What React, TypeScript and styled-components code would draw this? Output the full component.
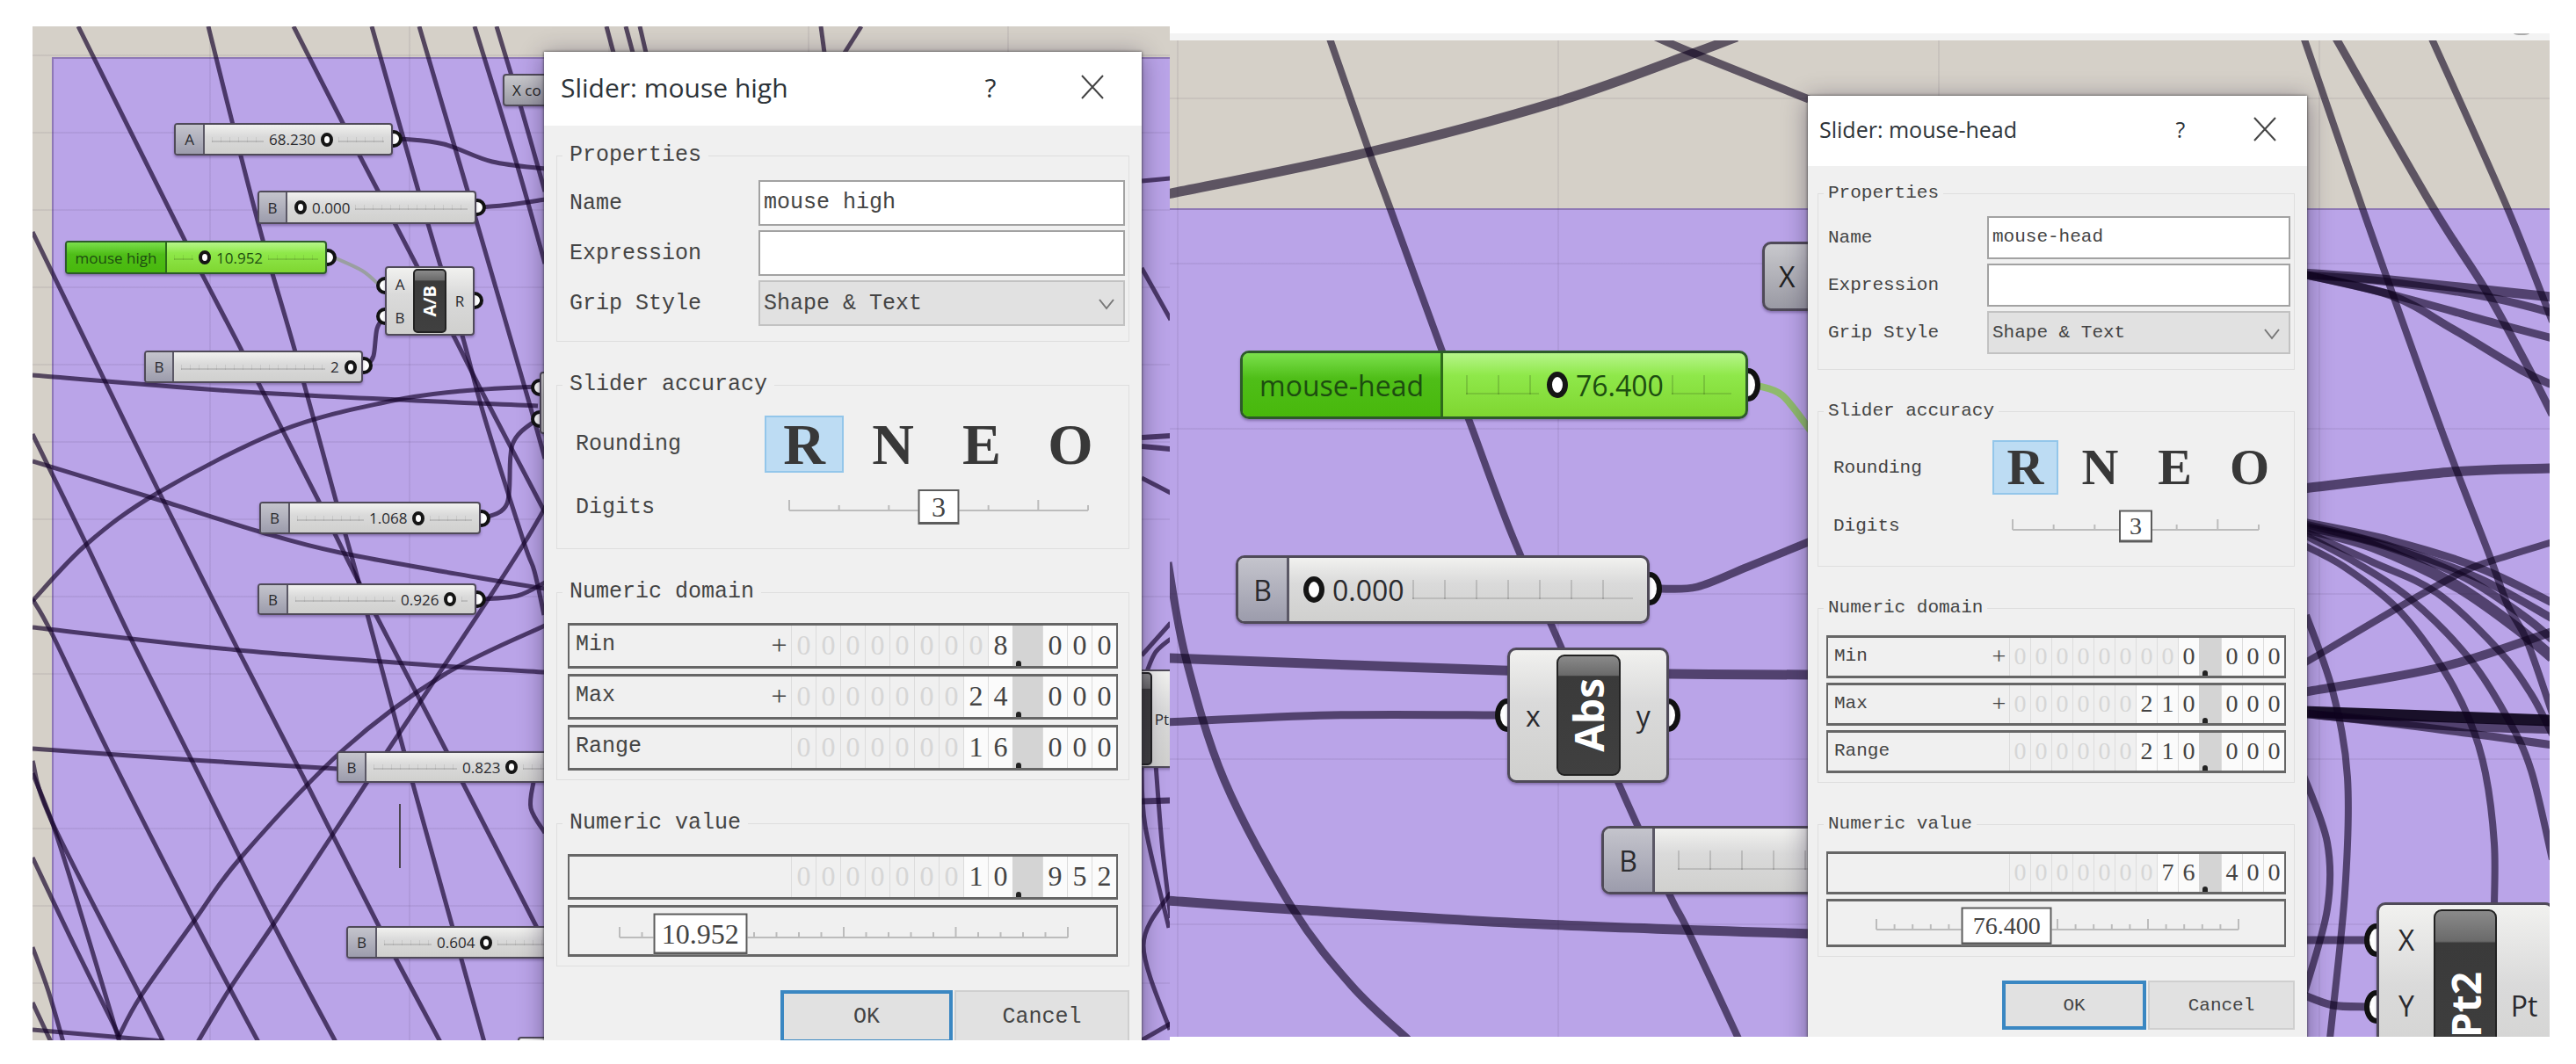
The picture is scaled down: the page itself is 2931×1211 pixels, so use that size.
import React, { useState } from "react";
import styled, { createGlobalStyle, css, ThemeProvider } from "styled-components";

const MONO = '"Liberation Mono", "Courier New", monospace';
const SERIF = '"Liberation Serif", "Times New Roman", serif';
const SANS = '"Open Sans", "Noto Sans", sans-serif';

const GlobalStyle = createGlobalStyle`
  * { box-sizing: border-box; }
  body { margin: 0; background: #fff; }
  button, input, select { font: inherit; color: inherit; margin: 0; }
`;

/* ---------- page ---------- */

const Page = styled.main`
  display: grid;
  grid-template-columns: 1294fr 1570fr;
  min-height: 100vh;
  padding: 0 30px 0 37px;
`;

const Pane = styled.section<{ $top: number; $bottom: number }>`
  display: flex;
  flex-direction: column;
  min-width: 0;
  padding: ${(p) => p.$top}px 0 ${(p) => p.$bottom}px;
`;

const ToolStrip = styled.div`
  display: flex;
  justify-content: flex-end;
  padding-right: 20px;
  height: 8px;
  background: #f3f3f3;
`;

const Canvas = styled.div`
  position: relative;
  flex: 1;
  overflow: hidden;
  background: #d5d0c8;
  font-family: ${SANS};
  color: #2a2a2e;
`;

const Group = styled.div<{ $left: number; $top: number }>`
  position: absolute;
  inset: ${(p) => p.$top}px 0 0 ${(p) => p.$left}px;
  background: #baa4e8;
  border: solid rgba(60, 40, 90, 0.35);
  border-width: 2px 0 0 ${(p) => (p.$left ? 2 : 0)}px;
`;

const GridLines = styled.div<{ $w: number; $h: number; $x: number; $y: number }>`
  position: absolute;
  inset: 0;
  background-image: linear-gradient(90deg, rgba(60, 40, 70, 0.08) 2px, transparent 2px),
    linear-gradient(rgba(60, 40, 70, 0.08) 2px, transparent 2px);
  background-size: ${(p) => p.$w}px ${(p) => p.$h}px;
  background-position: ${(p) => p.$x}px ${(p) => p.$y}px;
`;

const WireLayer = styled.svg`
  position: absolute;
  inset: 0;
  width: 100%;
  height: 100%;
  fill: none;
`;

/* ---------- wires ---------- */

type Pt = [number, number];

/** Catmull-Rom curve through the points, written as cubic segments. */
function smooth(pts: Pt[]): string {
  let d = `M${pts[0][0]} ${pts[0][1]}`;
  for (let i = 0; i < pts.length - 1; i++) {
    const a = pts[Math.max(0, i - 1)];
    const b = pts[i];
    const c = pts[i + 1];
    const e = pts[Math.min(pts.length - 1, i + 2)];
    d += `C${b[0] + (c[0] - a[0]) / 6} ${b[1] + (c[1] - a[1]) / 6} ${c[0] - (e[0] - b[0]) / 6} ${
      c[1] - (e[1] - b[1]) / 6
    } ${c[0]} ${c[1]}`;
  }
  return d;
}

interface Wire { p: Pt[]; w?: number; c?: string }

const Wires = ({ wires, width, color }: { wires: Wire[]; width: number; color: string }) => (
  <>
    {wires.map((w, i) => (
      <path key={i} d={smooth(w.p)} strokeWidth={w.w ?? width} stroke={w.c ?? color} />
    ))}
  </>
);

const Ports = ({ at, rx, ry, w }: { at: Pt[]; rx: number; ry: number; w: number }) => (
  <g fill="#fff" stroke="#111" strokeWidth={w}>
    {at.map(([x, y]) => (
      <ellipse key={`${x}-${y}`} cx={x} cy={y} rx={rx} ry={ry} />
    ))}
  </g>
);

const leftWires: Wire[] = [
  { p: [[89, 30], [210, 273], [274, 397], [362, 569], [408, 662], [507, 853], [610, 1054], [640, 1112]] },
  { p: [[237, 30], [264, 138], [299, 273], [335, 397], [382, 569], [408, 662], [459, 853], [514, 1052], [551, 1186]] },
  { p: [[334, 30], [389, 138], [430, 217], [474, 302], [516, 382], [551, 451], [620, 583]] },
  { p: [[423, 30], [476, 217], [501, 302], [526, 382], [551, 474], [596, 617], [608, 650], [619, 700]] },
  { p: [[624, 571], [596, 619], [543, 701], [442, 853], [379, 949], [311, 1052], [261, 1126], [225, 1186]] },
  { p: [[477, 30], [532, 217], [543, 255], [600, 451], [620, 522]] },
  { p: [[540, 30], [589, 190], [620, 300]] },
  { p: [[565, 30], [593, 123], [620, 218]] },
  { p: [[37, 264], [120, 435], [181, 560], [271, 740], [349, 892], [431, 1054], [501, 1186]] },
  { p: [[37, 494], [99, 621], [149, 727], [219, 867], [311, 1052], [382, 1186]] },
  { p: [[37, 682], [59, 721], [124, 857], [221, 1048], [294, 1186]] },
  { p: [[37, 866], [59, 935], [160, 1134], [186, 1186]] },
  { p: [[37, 880], [59, 935], [84, 1013], [136, 1186]] },
  { p: [[37, 976], [84, 1075], [136, 1180]] },
  { p: [[37, 1078], [55, 1128], [72, 1186]] },
  { p: [[37, 1141], [58, 1186]] },
  { p: [[37, 427], [295, 447], [612, 462]] },
  { p: [[612, 440], [526, 445], [442, 457], [320, 490], [181, 560], [99, 619], [37, 684]] },
  { p: [[37, 525], [181, 569], [295, 605], [387, 629], [547, 658], [620, 670]] },
  { p: [[37, 714], [271, 740], [505, 758], [620, 765]] },
  { p: [[37, 852], [219, 865], [384, 875]] },
  { p: [[620, 712], [505, 768], [391, 853], [274, 976], [221, 1048], [160, 1134], [135, 1180]] },
  { p: [[37, 1172], [186, 1185]] },
  { p: [[456, 158], [505, 164], [560, 184], [620, 192]] },
  { p: [[546, 236], [580, 233], [620, 227]] },
  { p: [[380, 293], [412, 308], [431, 324]], c: "#9a9fa0", w: 4 },
  { p: [[417, 416], [425, 405], [429, 374], [438, 360]] },
  { p: [[549, 590], [577, 573], [583, 506], [610, 478]] },
  { p: [[547, 682], [589, 678], [620, 663]] },
  { p: [[607, 890], [604, 920], [620, 948]] },
  { p: [[690, 30], [698, 60]] },
  { p: [[712, 30], [720, 60]] },
  { p: [[728, 30], [735, 60]] },
  { p: [[934, 30], [938, 60]] },
  { p: [[980, 30], [961, 60]] },
  { p: [[1299, 206], [1332, 203]] },
  { p: [[1299, 305], [1332, 364]] },
  { p: [[1299, 498], [1332, 496]], w: 6 },
  { p: [[1299, 508], [1332, 511]], w: 6 },
  { p: [[1299, 544], [1332, 561]] },
  { p: [[1299, 746], [1332, 709]] },
  { p: [[1305, 764], [1315, 742], [1332, 727]] },
  { p: [[1299, 870], [1303, 940], [1330, 1056]] },
  { p: [[1315, 870], [1322, 959], [1332, 1045]] },
  { p: [[1299, 912], [1332, 911]], w: 7 },
  { p: [[1332, 1016], [1301, 1076], [1331, 1172]] },
  { p: [[1299, 1184], [1332, 1165]] },
];

const rightWires: Wire[] = [
  { p: [[1513, 44], [1558, 173], [1582, 238], [1640, 397], [1671, 477], [1720, 608], [1776, 736], [1841, 890], [1899, 1017], [1921, 1060], [1978, 1182]], w: 8 },
  { p: [[1328, 221], [1558, 173], [1771, 116], [1926, 61], [1976, 42]] },
  { p: [[1884, 42], [1928, 61], [2058, 113]], w: 9 },
  { p: [[2000, 439], [2028, 450], [2060, 490]], c: "#8fba6c", w: 8 },
  { p: [[1888, 670], [1931, 668], [1989, 645], [2060, 616]], w: 9 },
  { p: [[1329, 640], [1349, 748], [1393, 888], [1470, 1033], [1538, 1122], [1602, 1183]], w: 9 },
  { p: [[1328, 749], [1708, 763], [1902, 767], [2060, 768]] },
  { p: [[1328, 822], [1514, 814], [1706, 814]], w: 9 },
  { p: [[1328, 1025], [1470, 1035], [1756, 1052], [2060, 1063]] },
  { p: [[2621, 42], [2688, 237], [2730, 356], [2784, 506], [2831, 628], [2853, 688], [2875, 729], [2904, 812]], w: 8 },
  { p: [[2657, 42], [2767, 234], [2827, 328], [2875, 415], [2904, 472]], w: 9 },
  { p: [[2766, 42], [2853, 237], [2904, 366]], w: 8 },
  { p: [[2620, 311], [2710, 318], [2904, 338]], w: 11 },
  { p: [[2620, 313], [2710, 320], [2830, 338], [2904, 356]], w: 9 },
  { p: [[2620, 312], [2720, 335], [2840, 368], [2904, 385]], w: 9 },
  { p: [[2620, 312], [2720, 336], [2790, 374], [2870, 422], [2904, 438]], w: 9 },
  { p: [[2620, 556], [2790, 537], [2904, 533]] },
  { p: [[2620, 756], [2728, 692], [2800, 652], [2836, 638], [2904, 617]], w: 8 },
  { p: [[2620, 788], [2779, 759], [2904, 719]], w: 10 },
  { p: [[2620, 810], [2904, 820]], w: 13, c: "rgba(8,0,20,.9)" },
  { p: [[2620, 812], [2780, 826], [2904, 830]], w: 10 },
  { p: [[2620, 812], [2760, 828], [2904, 848]], w: 9 },
  { p: [[2620, 594], [2720, 615], [2820, 646], [2904, 686]], w: 9 },
  { p: [[2620, 596], [2720, 622], [2820, 658], [2904, 704]], w: 9 },
  { p: [[2620, 600], [2700, 617], [2800, 655], [2870, 700], [2904, 728]], w: 9 },
  { p: [[2620, 600], [2700, 622], [2790, 664], [2860, 712], [2904, 748]], w: 13 },
  { p: [[2620, 604], [2700, 640], [2773, 675], [2843, 740], [2880, 790], [2904, 836]], w: 8 },
  { p: [[2620, 608], [2680, 640], [2743, 682], [2810, 750], [2853, 817], [2880, 877], [2904, 978]], w: 8 },
  { p: [[2620, 620], [2667, 645], [2727, 692], [2777, 757], [2810, 820], [2828, 880], [2838, 960], [2838, 1030]], w: 8 },
  { p: [[2624, 700], [2654, 786], [2671, 885], [2668, 1016], [2651, 1182]], w: 8 },
  { p: [[2620, 880], [2648, 959], [2648, 1035], [2622, 1130]], w: 8 },
  { p: [[2620, 1070], [2692, 1070]], w: 9 },
  { p: [[2620, 1132], [2654, 1144], [2692, 1146]], w: 9 },
];

/* ---------- nodes on the canvas ---------- */

const shell = css`
  position: absolute;
  display: flex;
  border: 2px solid #4f4a58;
  background: linear-gradient(#f1f1ef, #dadada 40%, #d0d0ce);
  overflow: hidden;
`;

interface Box { $x: number; $y: number; $w: number; $h: number }

const Node = styled.div<Box & { $big?: boolean; $green?: boolean }>`
  ${shell}
  left: ${(p) => p.$x}px;
  top: ${(p) => p.$y}px;
  width: ${(p) => p.$w}px;
  height: ${(p) => p.$h}px;
  font-size: ${(p) => (p.$big ? 32 : 17)}px;
  border-width: ${(p) => (p.$big ? 3 : 2)}px;
  border-radius: ${(p) => (p.$big ? 10 : 4)}px;
  box-shadow: 0 2px 3px rgba(40, 20, 70, 0.35);
  ${(p) =>
    p.$green &&
    css`
      border-color: #2d5a2a;
      color: #1d4d10;
      background: linear-gradient(#b6f58a, #8fe84a 35%, #7fd631);
    `}
`;

const Tag = styled.div<{ $w: number; $big?: boolean; $green?: boolean }>`
  display: flex;
  align-items: center;
  justify-content: center;
  flex: none;
  width: ${(p) => p.$w}px;
  border-right: ${(p) => (p.$big ? 3 : 2)}px solid ${(p) => (p.$green ? "#2d6a1a" : "#5b5866")};
  background: ${(p) =>
    p.$green ? "linear-gradient(#7be04c, #4fbe18 40%, #48b80c)" : "linear-gradient(#c4c4cc, #9c9cac)"};
`;

const Track = styled.div<{ $big?: boolean }>`
  display: flex;
  align-items: center;
  flex: 1;
  min-width: 0;
  gap: ${(p) => (p.$big ? 9 : 6)}px;
  padding: 0 ${(p) => (p.$big ? 16 : 8)}px;
  white-space: nowrap;
`;

const Rail = styled.div<{ $w?: number; $big?: boolean }>`
  flex: ${(p) => (p.$w === undefined ? "1 1 0" : `0 0 ${p.$w}px`)};
  height: ${(p) => (p.$big ? 22 : 6)}px;
  border-bottom: 2px solid rgba(0, 0, 0, 0.12);
  background: ${(p) =>
    p.$big
      ? "repeating-linear-gradient(90deg, rgba(0,0,0,.14) 0 2px, transparent 2px 36px)"
      : "repeating-linear-gradient(90deg, rgba(0,0,0,.08) 0 1px, transparent 1px 10px)"};
  &:first-child {
    margin-left: ${(p) => (p.$big ? 10 : 0)}px;
  }
`;

const Ring = styled.span<{ $big?: boolean }>`
  flex: none;
  width: ${(p) => (p.$big ? 24 : 14)}px;
  height: ${(p) => (p.$big ? 30 : 16)}px;
  border: ${(p) => (p.$big ? 6 : 4)}px solid #151515;
  border-radius: 50%;
  background: #fff;
`;

interface SliderNodeProps {
  x: number; y: number; w: number; h: number;
  tag: string; tagW: number; value?: string;
  lead?: number; ringFirst?: boolean; big?: boolean; green?: boolean;
}

const SliderNode = ({ x, y, w, h, tag, tagW, value, lead, ringFirst, big, green }: SliderNodeProps) => (
  <Node $x={x} $y={y} $w={w} $h={h} $big={big} $green={green}>
    <Tag $w={tagW} $big={big} $green={green}>{tag}</Tag>
    <Track $big={big}>
      {lead !== 0 && <Rail $w={lead} $big={big} />}
      {value && ringFirst && <Ring $big={big} />}
      {value && <span>{value}</span>}
      {value && !ringFirst && <Ring $big={big} />}
      {value && <Rail $big={big} />}
    </Track>
  </Node>
);

const PortNames = styled.div<{ $stacked?: boolean }>`
  display: flex;
  flex: 1;
  flex-direction: column;
  align-items: center;
  justify-content: ${(p) => (p.$stacked ? "flex-start" : "space-around")};
  gap: ${(p) => (p.$stacked ? 32 : 0)}px;
  padding-top: ${(p) => (p.$stacked ? 18 : 0)}px;
`;

const Core = styled.div<{ $w: number; $big?: boolean }>`
  display: flex;
  align-items: center;
  justify-content: center;
  flex: none;
  width: ${(p) => p.$w}px;
  margin: ${(p) => (p.$big ? 5 : 1)}px 0;
  border: 2px solid #222;
  border-radius: ${(p) => (p.$big ? 9 : 5)}px;
  background: linear-gradient(#8a8a8a, #6a6a6a 16%, #3a3a3a 17%, #404040);
  color: #fff;
  font-weight: 700;
  font-size: ${(p) => (p.$big ? 46 : 20)}px;
  line-height: 1;
`;

const CoreText = styled.span`
  writing-mode: vertical-rl;
  transform: rotate(180deg);
`;

const Panel = styled(Node)`
  align-items: center;
  padding-left: ${(p) => (p.$big ? 16 : 9)}px;
  background: linear-gradient(#c8c8cc, #9a9aa4);
  color: #222;
  white-space: nowrap;
`;

/* ---------- slider dialog ---------- */

interface Metrics {
  width: number; title: number; titleH: number; font: number; legendH: number; bodyTop: number;
  label: number; fieldH: number; gap: number; letterW: number; letterH: number; letterGap: number;
  letterSize: number; digitsH: number; digitsThumb: number; cell: number; dot: number; digit: number;
  valueH: number; valueThumb: number; rowPad: number; rowGap: number; btnL: number; btnR: number; btnH: number;
}

const large: Metrics = {
  width: 680, title: 30, titleH: 84, font: 25, legendH: 30, bodyTop: 19, label: 215, fieldH: 52, gap: 5,
  letterW: 90, letterH: 65, letterGap: 11, letterSize: 66, digitsH: 40, digitsThumb: 47, cell: 28, dot: 34,
  digit: 32, valueH: 59, valueThumb: 107, rowPad: 12, rowGap: 6, btnL: 196, btnR: 199, btnH: 60,
};

const small: Metrics = {
  width: 568, title: 25, titleH: 80, font: 21, legendH: 26, bodyTop: 18, label: 181, fieldH: 49, gap: 5,
  letterW: 75, letterH: 62, letterGap: 10, letterSize: 58, digitsH: 37, digitsThumb: 38, cell: 24, dot: 25,
  digit: 28, valueH: 55, valueThumb: 103, rowPad: 9, rowGap: 5, btnL: 164, btnR: 167, btnH: 56,
};

const m = (k: keyof Metrics) => (p: { theme: any }) => `${p.theme[k]}px`;

const Dialog = styled.form<{ $x: number; $y: number }>`
  position: absolute;
  left: ${(p) => p.$x}px;
  top: ${(p) => p.$y}px;
  width: ${m("width")};
  padding-bottom: 40px;
  background: #f0f0f0;
  color: #444;
  font-family: ${MONO};
  font-size: ${m("font")};
  box-shadow: 0 0 3px rgba(40, 40, 40, 0.9), 0 4px 26px rgba(30, 20, 50, 0.45);
`;

const TitleBar = styled.header`
  display: flex;
  align-items: center;
  height: ${m("titleH")};
  padding: 0 14px 4px ${(p) => (p.theme.width > 600 ? 19 : 13)}px;
  background: #fff;
  color: #2d3338;
  font-family: ${SANS};
`;

const Title = styled.h2`
  flex: 1;
  margin: 0;
  font-size: ${m("title")};
  font-weight: 400;
  white-space: nowrap;
`;

const TitleButton = styled.button`
  display: flex;
  align-items: center;
  justify-content: center;
  width: ${(p) => (p.theme.width > 600 ? 80 : 64)}px;
  height: 48px;
  margin-left: ${(p) => (p.theme.width > 600 ? 36 : 32)}px;
  padding: 0;
  border: 0;
  background: none;
  font-size: ${m("title")};
  & + & {
    margin-right: ${(p) => (p.theme.width > 600 ? 4 : 2)}px;
  }
`;

const Body = styled.div`
  display: flex;
  flex-direction: column;
  gap: 34px;
  padding: ${m("bodyTop")} 14px 0 ${(p) => (p.theme.width > 600 ? 14 : 11)}px;
`;

const FieldGroup = styled.fieldset`
  min-width: 0;
  margin: 0;
  padding: 0;
  border: 1px solid #dedede;
`;

const Legend = styled.legend`
  margin-left: 6px;
  padding: 0 ${(p) => (p.theme.width > 600 ? 8 : 5)}px;
  height: ${m("legendH")};
  line-height: ${m("legendH")};
`;

const Fields = styled.div`
  display: grid;
  grid-template-columns: ${m("label")} 1fr;
  gap: ${m("gap")} 0;
  align-items: center;
  padding: 13px 4px 17px ${(p) => (p.theme.width > 600 ? 14 : 11)}px;
`;

const TextField = styled.input`
  width: 100%;
  min-width: 0;
  height: ${m("fieldH")};
  padding: 0 4px 2px;
  border: 2px solid #a2a2a2;
  border-radius: 0;
  background: #fff;
`;

const SelectWrap = styled.div`
  position: relative;
  display: flex;
  svg {
    position: absolute;
    right: 12px;
    top: 40%;
    pointer-events: none;
  }
`;

const Select = styled.select`
  appearance: none;
  width: 100%;
  height: ${m("fieldH")};
  padding: 0 4px;
  border: 2px solid #c2c2c2;
  border-radius: 0;
  background: #e1e1e1;
`;

const Accuracy = styled.div`
  display: grid;
  grid-template-columns: ${m("label")} 1fr;
  row-gap: ${(p) => (p.theme.width > 600 ? 19 : 17)}px;
  align-items: center;
  padding: 20px 10px 27px ${(p) => (p.theme.width > 600 ? 21 : 17)}px;
`;

const Letters = styled.div`
  display: flex;
  gap: ${m("letterGap")};
`;

const Letter = styled.label<{ $on: boolean }>`
  display: flex;
  align-items: center;
  justify-content: center;
  width: ${m("letterW")};
  height: ${m("letterH")};
  border: 2px solid ${(p) => (p.$on ? "#93c6ea" : "transparent")};
  background: ${(p) => (p.$on ? "#bddcf3" : "none")};
  color: #383838;
  font: 700 ${m("letterSize")} / 1 ${SERIF};
  input {
    position: absolute;
    opacity: 0;
  }
`;

const Ruler = styled.div<{ $h: "digitsH" | "valueH" }>`
  position: relative;
  display: flex;
  align-items: center;
  height: ${(p) => p.theme[p.$h]}px;
  svg {
    width: 100%;
    height: 16px;
    overflow: visible;
    stroke: #bcbcbc;
    stroke-width: 2;
  }
  input {
    position: absolute;
    inset: 0;
    width: 100%;
    height: 100%;
    opacity: 0;
  }
`;

const Thumb = styled.output<{ $w: "digitsThumb" | "valueThumb" }>`
  position: absolute;
  top: 50%;
  transform: translate(-50%, -50%);
  display: flex;
  align-items: center;
  justify-content: center;
  width: ${(p) => p.theme[p.$w]}px;
  height: ${(p) => (p.$w === "digitsThumb" ? p.theme.digitsH : p.theme.valueH - 12)}px;
  border: 2px solid #5c5c5c;
  border-bottom-width: 3px;
  background: #fff;
  font-family: ${SERIF};
  font-size: ${m("digit")};
  line-height: 1;
  pointer-events: none;
`;

const DigitsRuler = styled.div`
  padding: 0 ${(p) => (p.theme.width > 600 ? 36 : 30)}px 0 ${(p) => (p.theme.width > 600 ? 28 : 23)}px;
`;

const Rows = styled.div`
  display: grid;
  gap: ${m("rowGap")};
  padding: ${(p) => (p.theme.width > 600 ? 20 : 18)}px ${m("rowPad")} 10px;
`;

const NumberRow = styled.div`
  display: flex;
  align-items: stretch;
  height: ${m("fieldH")};
  border: solid #666;
  border-width: 3px 2px;
  line-height: ${(p) => p.theme.fieldH - 8}px;
`;

const RowName = styled.span`
  flex: 1;
  padding-left: 7px;
`;

const Digit = styled.span<{ $dim?: boolean; $plain?: boolean }>`
  width: ${m("cell")};
  border-left: 1px solid ${(p) => (p.$plain ? "transparent" : "#dcdcdc")};
  background: ${(p) => (p.$dim || p.$plain ? "none" : "#fbfbfb")};
  color: ${(p) => (p.$dim ? "#d6d6d6" : "#444")};
  font-family: ${SERIF};
  font-size: ${m("digit")};
  text-align: center;
`;

const Point = styled.span`
  display: flex;
  align-items: flex-end;
  width: ${m("dot")};
  padding-left: 4px;
  background: #d4d4d4;
  &::after {
    content: "";
    width: 6px;
    height: 6px;
    border-radius: 3px 3px 0 0;
    background: #222;
  }
`;

const ValueBox = styled.div`
  height: ${m("valueH")};
  padding: 0 ${(p) => (p.theme.width > 600 ? 55 : 52)}px 0 ${(p) => (p.theme.width > 600 ? 57 : 55)}px;
  border: solid #666;
  border-width: 3px 2px;
  display: grid;
  align-items: center;
`;

const Actions = styled.div`
  display: flex;
  justify-content: flex-end;
  gap: 2px;
  padding: 27px 14px 0;
`;

const Action = styled.button<{ $main?: boolean }>`
  width: ${(p) => (p.$main ? p.theme.btnL : p.theme.btnR)}px;
  height: ${m("btnH")};
  padding: 0;
  border: ${(p) => (p.$main ? "4px solid #3a87c2" : "2px solid #cfcfcf")};
  background: #e1e1e1;
`;

const Ticks = ({ count, major }: { count: number; major: number }) => (
  <svg aria-hidden="true">
    <line x1="0" x2="100%" y1="12" y2="12" />
    {Array.from({ length: count + 1 }, (_, i) => (
      <line key={i} x1={`${(i * 100) / count}%`} x2={`${(i * 100) / count}%`} y1={i % major ? 6 : 0} y2="12" />
    ))}
  </svg>
);

const NumberField = ({ name, sign, value, decimals }: { name?: string; sign?: boolean; value: string; decimals: string }) => {
  const pad = 9 - value.length;
  return (
    <NumberRow>
      <RowName>{name}</RowName>
      {sign && <Digit $plain>+</Digit>}
      {Array.from({ length: pad }, (_, i) => (
        <Digit key={i} $dim>0</Digit>
      ))}
      {value.split("").map((c, i) => (
        <Digit key={i}>{c}</Digit>
      ))}
      <Point />
      {decimals.split("").map((c, i) => (
        <Digit key={i}>{c}</Digit>
      ))}
    </NumberRow>
  );
};

interface DialogProps {
  id: string; x: number; y: number; metrics: Metrics; name: string;
  min: string; max: string; range: string; value: string; ratio: number;
}

const SliderDialog = ({ id, x, y, metrics, name, min, max, range, value, ratio }: DialogProps) => {
  const [label, setLabel] = useState(name);
  const [expression, setExpression] = useState("");
  const [rounding, setRounding] = useState("R");
  const [digits, setDigits] = useState(3);
  const [whole, part] = value.split(".");
  return (
    <ThemeProvider theme={metrics}>
      <Dialog $x={x} $y={y} onSubmit={(e) => e.preventDefault()}>
        <TitleBar>
          <Title>Slider: {name}</Title>
          <TitleButton type="button">?</TitleButton>
          <TitleButton type="button" aria-label="Close">
            <svg width="26" height="28" viewBox="0 0 26 28" stroke="#444" strokeWidth="2">
              <path d="M1 1L25 27M25 1L1 27" />
            </svg>
          </TitleButton>
        </TitleBar>
        <Body>
          <FieldGroup>
            <Legend>Properties</Legend>
            <Fields>
              <label htmlFor={`${id}-name`}>Name</label>
              <TextField id={`${id}-name`} value={label} onChange={(e) => setLabel(e.target.value)} />
              <label htmlFor={`${id}-expr`}>Expression</label>
              <TextField id={`${id}-expr`} value={expression} onChange={(e) => setExpression(e.target.value)} />
              <label htmlFor={`${id}-grip`}>Grip Style</label>
              <SelectWrap>
                <Select id={`${id}-grip`}>
                  <option>Shape &amp; Text</option>
                </Select>
                <svg width="18" height="13" viewBox="0 0 18 13" fill="none" stroke="#777" strokeWidth="2">
                  <path d="M1 1L9 11L17 1" />
                </svg>
              </SelectWrap>
            </Fields>
          </FieldGroup>
          <FieldGroup>
            <Legend>Slider accuracy</Legend>
            <Accuracy>
              <span>Rounding</span>
              <Letters>
                {["R", "N", "E", "O"].map((l) => (
                  <Letter key={l} $on={rounding === l}>
                    <input type="radio" name={`${id}-rounding`} checked={rounding === l} onChange={() => setRounding(l)} />
                    {l}
                  </Letter>
                ))}
              </Letters>
              <label htmlFor={`${id}-digits`}>Digits</label>
              <DigitsRuler>
                <Ruler $h="digitsH">
                  <Ticks count={6} major={5} />
                  <input
                    id={`${id}-digits`}
                    type="range"
                    min={0}
                    max={6}
                    value={digits}
                    onChange={(e) => setDigits(+e.target.value)}
                  />
                  <Thumb $w="digitsThumb" style={{ left: `${(digits / 6) * 100}%` }}>{digits}</Thumb>
                </Ruler>
              </DigitsRuler>
            </Accuracy>
          </FieldGroup>
          <FieldGroup>
            <Legend>Numeric domain</Legend>
            <Rows>
              <NumberField name="Min" sign value={min} decimals="000" />
              <NumberField name="Max" sign value={max} decimals="000" />
              <NumberField name="Range" value={range} decimals="000" />
            </Rows>
          </FieldGroup>
          <FieldGroup>
            <Legend>Numeric value</Legend>
            <Rows>
              <NumberField value={whole} decimals={part} />
              <ValueBox>
                <Ruler $h="valueH">
                  <Ticks count={20} major={5} />
                  <input type="range" aria-label="Numeric value" min={min} max={max} step="0.001" defaultValue={value} />
                  <Thumb $w="valueThumb" style={{ left: `${ratio * 100}%` }}>{value}</Thumb>
                </Ruler>
              </ValueBox>
            </Rows>
          </FieldGroup>
        </Body>
        <Actions>
          <Action $main type="submit">OK</Action>
          <Action type="button">Cancel</Action>
        </Actions>
      </Dialog>
    </ThemeProvider>
  );
};

/* ---------- app ---------- */

export default function App() {
  return (
    <>
      <GlobalStyle />
      <Page>
        <Pane $top={30} $bottom={27}>
          <Canvas>
            <Group $left={22} $top={35} />
            <GridLines $w={227} $h={88} $x={201} $y={32} />
            <WireLayer>
              <g transform="translate(-37 -30)">
                <Wires wires={leftWires} width={5} color="rgba(22,4,44,.68)" />
                <path d="M455 915V988" stroke="#4c4650" strokeWidth="2" />
                <Ports
                  rx={8}
                  ry={8}
                  w={4}
                  at={[[448, 158], [543, 236], [373, 293], [414, 416], [548, 590], [543, 682], [438, 325], [438, 360], [540, 342], [614, 441], [614, 477]]}
                />
              </g>
            </WireLayer>
            <Panel $x={535} $y={54} $w={60} $h={37}>X co</Panel>
            <Node $x={577} $y={393} $w={60} $h={71} />
            <Node $x={1240} $y={732} $w={58} $h={112}>
              <Core $w={32} />
              <PortNames>Pt</PortNames>
            </Node>
            <Node $x={552} $y={1150} $w={80} $h={36} />
            <SliderNode x={161} y={110} w={249} h={37} tag="A" tagW={33} lead={59} value="68.230" />
            <SliderNode x={256} y={187} w={249} h={38} tag="B" tagW={32} lead={0} ringFirst value="0.000" />
            <SliderNode x={37} y={244} w={298} h={38} tag="mouse high" tagW={114} lead={22} ringFirst value="10.952" green />
            <SliderNode x={127} y={369} w={249} h={37} tag="B" tagW={32} lead={164} value="2" />
            <SliderNode x={258} y={541} w={252} h={37} tag="B" tagW={33} lead={76} value="1.068" />
            <SliderNode x={256} y={634} w={249} h={36} tag="B" tagW={33} lead={114} value="0.926" />
            <SliderNode x={346} y={825} w={252} h={36} tag="B" tagW={32} lead={95} value="0.823" />
            <SliderNode x={357} y={1024} w={252} h={37} tag="B" tagW={33} lead={54} value="0.604" />
            <Node $x={401} $y={273} $w={102} $h={79}>
              <PortNames>
                <span>A</span>
                <span>B</span>
              </PortNames>
              <Core $w={38}>
                <CoreText>A/B</CoreText>
              </Core>
              <PortNames>R</PortNames>
            </Node>
            <SliderDialog
              id="high"
              x={582}
              y={29}
              metrics={large}
              name="mouse high"
              min="8"
              max="24"
              range="16"
              value="10.952"
              ratio={0.18}
            />
          </Canvas>
        </Pane>
        <Pane $top={38} $bottom={31}>
          <ToolStrip>
            <svg width="24" height="4" viewBox="0 0 24 4">
              <ellipse cx="12" cy="0" rx="9" ry="2" fill="#aaa" />
            </svg>
          </ToolStrip>
          <Canvas>
            <Group $left={0} $top={191} />
            <GridLines $w={433} $h={188} $x={8} $y={65} />
            <WireLayer>
              <g transform="translate(-1331 -46)">
                <Wires wires={rightWires} width={11} color="rgba(14,2,30,.6)" />
                <Ports rx={11} ry={16} w={6} at={[[1989, 438], [1877, 670], [1715, 814], [1898, 814], [2704, 1070], [2704, 1146]]} />
              </g>
            </WireLayer>
            <Panel $big $x={674} $y={229} $w={70} $h={79}>X</Panel>
            <SliderNode big green x={80} y={353} w={578} h={78} tag="mouse-head" tagW={228} lead={83} ringFirst value="76.400" />
            <SliderNode big x={75} y={586} w={471} h={78} tag="B" tagW={58} lead={0} ringFirst value="0.000" />
            <Node $big $x={384} $y={691} $w={184} $h={154}>
              <PortNames>x</PortNames>
              <Core $big $w={73}>
                <CoreText>Abs</CoreText>
              </Core>
              <PortNames>y</PortNames>
            </Node>
            <SliderNode big x={491} y={894} w={400} h={78} tag="B" tagW={58} />
            <Node $big $x={1373} $y={981} $w={202} $h={234}>
              <PortNames $stacked>
                <span>X</span>
                <span>Y</span>
              </PortNames>
              <Core $big $w={72}>
                <CoreText>Pt2</CoreText>
              </Core>
              <PortNames>Pt</PortNames>
            </Node>
            <SliderDialog
              id="head"
              x={726}
              y={63}
              metrics={small}
              name="mouse-head"
              min="0"
              max="210"
              range="210"
              value="76.400"
              ratio={0.36}
            />
          </Canvas>
        </Pane>
      </Page>
    </>
  );
}
